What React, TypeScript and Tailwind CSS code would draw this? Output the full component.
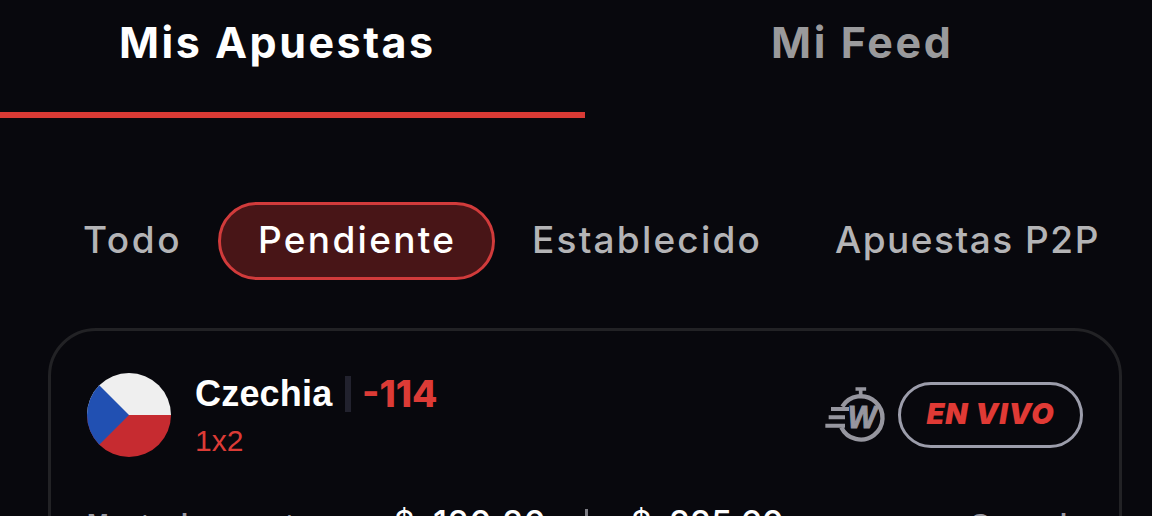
const tabs = [
    { id: 1, name: "Mis Apuestas", style: "w-[585px] pl-[119px] text-white border-[#d93a35] tracking-[2.5px]" },
    { id: 2, name: "Mi Feed", style: "w-[567px] pl-[186px] text-[#9a9a9c] border-transparent tracking-[2.6px]" },
];

const filters = [
    { id: 1, name: "Todo", style: "w-[138px] text-[#b4b4b6] border-transparent tracking-[2.6px]" },
    { id: 2, name: "Pendiente", style: "w-[277px] pl-[37px] text-white bg-[#481517] border-[#d13b3b] tracking-[2.3px]" },
    { id: 3, name: "Establecido", style: "w-[303px] pl-[34px] text-[#b4b4b6] border-transparent tracking-[2.2px]" },
    { id: 4, name: "Apuestas P2P", style: "w-[290px] pl-[34px] text-[#b4b4b6] border-transparent tracking-[1.5px]" },
];

const CzechFlag = () => (
    <svg viewBox="0 0 84 84" className="w-[84px] h-[84px] rounded-full shrink-0">
        <rect width="84" height="42" fill="#efefef" />
        <rect y="42" width="84" height="42" fill="#c62b30" />
        <path d="M0 0L42 42L0 84Z" fill="#2150b2" />
    </svg>
);

const StopwatchIcon = () => (
    <svg viewBox="0 0 180 165" className="w-[60px] h-[55px] shrink-0 overflow-visible" fill="none" stroke="#96969f">
        <path d="M97 3H118M107 3V20" strokeWidth="11" strokeLinecap="square" />
        <path d="M52 56A65 65 0 1 1 49 118" strokeWidth="13" />
        <path d="M18 63H72M11 88H60M1 113H60" strokeWidth="12" />
        <text x="68" y="121" fill="#96969f" strokeWidth="3" className="font-['Liberation_Sans'] text-[92px] font-bold italic">W</text>
    </svg>
);

const BetCard = () => {
    return (
        <div className="ml-12 mt-12 w-[1074px] h-[320px] shrink-0 rounded-t-[48px] border-[3px] border-[#222225] px-9">
            <div className="flex items-center pt-[41px]">
                <CzechFlag />
                <div className="ml-6 mt-px font-['Liberation_Sans',sans-serif]">
                    <div className="flex items-center h-[42px]">
                        <h2 className="w-[138px] text-[36px] leading-[42px] tracking-[0.2px] font-bold text-white">Czechia</h2>
                        <span className="ml-3 w-[6px] h-9 bg-[#22222e]" />
                        <span className="ml-[11px] text-[37px] leading-[42px] font-extrabold text-[#dc3b36] font-['Inter',sans-serif]">-114</span>
                    </div>
                    <p className="mt-[9px] text-[30px] leading-[34px] text-[#dc3b36]">1x2</p>
                </div>
                <div className="ml-auto flex items-center">
                    <StopwatchIcon />
                    <span className="ml-[13px] w-[185px] h-[66px] pb-[3px] flex items-center justify-center rounded-full border-[3px] border-[#9c9dab] text-[29px] tracking-[0.9px] font-black italic text-[#e03a35] font-['Inter',sans-serif]">EN VIVO</span>
                </div>
            </div>
            <div className="mt-[43px] flex items-start font-['Inter',sans-serif]">
                <span className="w-[307px] pt-[7px] text-[26px] leading-[30px] font-bold text-[#9a9aa3] font-['Liberation_Sans',sans-serif]">Monto de apuesta</span>
                <span className="w-[39px] text-[32px] leading-[44px] text-white">$</span>
                <span className="w-[152px] text-[34px] leading-[44px] tracking-[0.7px] font-medium text-white">120.20</span>
                <span className="mt-2 w-[3px] h-9 bg-[#7d7d84]" />
                <span className="ml-[43px] w-[38px] text-[32px] leading-[44px] text-white">$</span>
                <span className="text-[34px] leading-[44px] font-medium text-white">225.60</span>
                <span className="ml-auto pt-[7px] text-[26px] leading-[30px] font-bold text-[#9a9aa3] font-['Liberation_Sans',sans-serif]">Ganando</span>
            </div>
        </div>
    );
};

const App = () => {
    return (
        <main className="w-[1152px] h-[516px] overflow-hidden flex flex-col bg-[#08080d] font-['Inter',sans-serif]">
            <nav className="flex h-[118px] shrink-0">
                {tabs.map((item) => (
                    <button key={item.id} className={`h-[118px] pt-4 flex items-start border-b-[6px] whitespace-nowrap text-[43px] leading-[52px] font-bold ${item.style}`}>
                        {item.name}
                    </button>
                ))}
            </nav>
            <div className="mt-[84px] pl-[80px] flex shrink-0">
                {filters.map((item) => (
                    <button key={item.id} className={`h-[78px] pb-[2px] flex items-center rounded-full border-[3px] whitespace-nowrap text-[37px] font-medium ${item.style}`}>
                        {item.name}
                    </button>
                ))}
            </div>
            <BetCard />
        </main>
    );
};

export default App;
